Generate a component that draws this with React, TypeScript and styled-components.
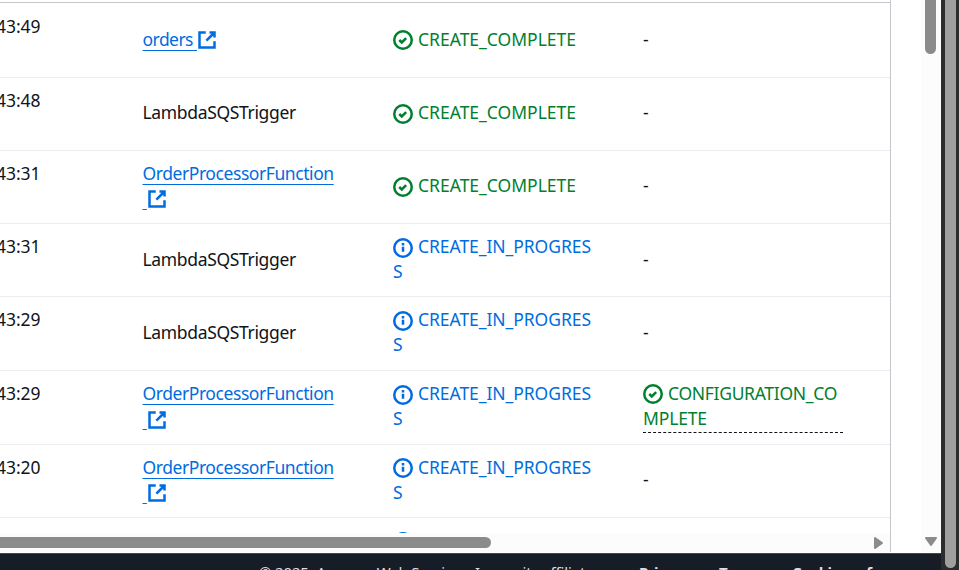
import React from "react";
import styled, { createGlobalStyle } from "styled-components";

const GlobalStyle = createGlobalStyle`
  *, *::before, *::after { box-sizing: border-box; }
  html, body { margin: 0; height: 570px; overflow: hidden; background: #fff; }
`;

const Page = styled.div`
  display: flex;
  width: 959px;
  height: 570px;
  overflow: hidden;
  background: #fff;
  color: #0f141a;
  font-family: "Noto Sans", "Open Sans", sans-serif;
  font-size: 17.5px;
  line-height: 25px;
`;

const Main = styled.div`
  width: 941px;
  display: flex;
  flex-direction: column;
`;

const Body = styled.div`
  height: 553px;
  flex: none;
  display: flex;
  justify-content: space-between;
`;

const Panel = styled.section`
  width: 891px;
  height: 552px;
  border-right: 1px solid #c6c6cd;
  display: flex;
  flex-direction: column;
`;

const Rows = styled.div`
  height: 533px;
  padding-top: 2px;
  overflow: hidden;
  flex: none;
`;

const HeaderRule = styled.div`
  height: 1px;
  background: #c6c6cd;
`;

const Row = styled.div<{ $height: number }>`
  display: grid;
  grid-template-columns: 142.5px 250.5px 250px 200px;
  align-items: start;
  height: ${(p) => p.$height}px;
  border-bottom: 1px solid #ebebf0;
`;

const Cell = styled.div<{ $top?: number }>`
  padding-top: ${(p) => p.$top ?? 10}px;
  white-space: nowrap;
`;

const TimeText = styled.span`
  display: inline-block;
  margin-left: -4px;
  letter-spacing: -0.05px;
`;

const Text = styled.span<{ $spacing?: number }>`
  letter-spacing: ${(p) => p.$spacing ?? 0}px;
`;

const Link = styled.a`
  color: #006ce0;
  text-decoration: underline;
  text-decoration-thickness: 1px;
  text-underline-offset: 4px;
`;

const Status = styled.div<{ $tone: "success" | "info"; $dashed?: boolean }>`
  color: ${(p) => (p.$tone === "success" ? "#00802f" : "#006ce0")};
  border-bottom: ${(p) => (p.$dashed ? "1px dashed #0f141a" : "none")};
  padding-bottom: ${(p) => (p.$dashed ? "1px" : "0")};
`;

const Line = styled.div`
  height: 25px;
`;

const Glyph = styled.svg<{ $drop: number }>`
  width: 20px;
  height: 20px;
  fill: none;
  stroke: currentColor;
  stroke-width: 2;
  vertical-align: ${(p) => -p.$drop}px;
`;

const StatusGlyph = styled(Glyph)`
  margin-right: 5px;
`;

const HorizontalTrack = styled.div`
  height: 19px;
  background: #fcfcfc;
  display: flex;
  align-items: center;
  justify-content: space-between;
  padding-right: 6px;
`;

const HorizontalThumb = styled.div`
  width: 491px;
  height: 11px;
  border-radius: 0 6px 6px 0;
  background: #8b8b8b;
`;

const VerticalTrack = styled.div`
  width: 20px;
  height: 552px;
  background: #fcfcfc;
  display: flex;
  flex-direction: column;
  justify-content: space-between;
  align-items: center;
  padding: 0 1px 5px 0;
`;

const VerticalThumb = styled.div`
  width: 11px;
  height: 54px;
  border-radius: 0 0 6px 6px;
  background: #8b8b8b;
`;

const Arrow = styled.svg`
  display: block;
  fill: #8b8b8b;
  stroke: #8b8b8b;
  stroke-linejoin: round;
`;

const Footer = styled.footer`
  height: 17px;
  overflow: hidden;
  display: flex;
  background: #161d26;
  border-top: 1px solid #424650;
  color: #dedee3;
  font-size: 15px;
  line-height: 20px;
  padding: 8px 0 0 259px;
  white-space: nowrap;
`;

const Copyright = styled.span`
  width: 380px;
  flex: none;
  letter-spacing: -0.15px;
`;

const FooterLink = styled.a<{ $width: number }>`
  width: ${(p) => p.$width}px;
  flex: none;
  font-weight: 700;
  letter-spacing: -0.55px;
`;

const WindowTrack = styled.div`
  width: 18px;
  background: #2c2c2c;
  padding-left: 4px;
`;

const WindowThumb = styled.div`
  width: 11px;
  height: 568px;
  border-radius: 0 0 6px 6px;
  background: #9f9f9f;
`;

const External = ({ drop = 4 }: { drop?: number }) => (
  <Glyph viewBox="0 0 16 16" $drop={drop}>
    <path d="M10 2h4v4M7.5 8.5 14 2M14 9.048V14H2V2h5" />
  </Glyph>
);

const Check = ({ drop = 4 }: { drop?: number }) => (
  <StatusGlyph viewBox="0 0 16 16" $drop={drop}>
    <circle cx="8" cy="8" r="7" />
    <path d="m5 8 2 2 3.521-3.521" />
  </StatusGlyph>
);

const Info = ({ drop = 4 }: { drop?: number }) => (
  <StatusGlyph viewBox="0 0 16 16" $drop={drop}>
    <circle cx="8" cy="8" r="7" />
    <path d="M8 11V7M8 6V4" />
  </StatusGlyph>
);

const Complete = ({ drop }: { drop?: number }) => (
  <Status $tone="success">
    <Line>
      <Check drop={drop} />
      <Text>CREATE_COMPLETE</Text>
    </Line>
  </Status>
);

const InProgress = ({ drop }: { drop?: number }) => (
  <Status $tone="info">
    <Line>
      <Info drop={drop} />
      <Text $spacing={-0.06}>CREATE_IN_PROGRES</Text>
    </Line>
    <Line>S</Line>
  </Status>
);

const ConfigurationComplete = () => (
  <Status $tone="success" $dashed>
    <Line>
      <Check />
      <Text $spacing={-0.3}>CONFIGURATION_CO</Text>
    </Line>
    <Line>
      <Text $spacing={-0.15}>MPLETE</Text>
    </Line>
  </Status>
);

type StackEvent = {
  time: string;
  resource: string;
  height: number;
  done?: boolean;
  configured?: boolean;
  timeTop?: number;
  singleTop: number;
  statusDrop: number;
  linkDrop?: number;
};

const events: StackEvent[] = [
  { time: "43:49", resource: "orders", done: true, height: 75, timeTop: 11, singleTop: 24, statusDrop: 4 },
  { time: "43:48", resource: "LambdaSQSTrigger", done: true, height: 73, singleTop: 22, statusDrop: 5 },
  { time: "43:31", resource: "OrderProcessorFunction", done: true, height: 73, singleTop: 22, statusDrop: 5 },
  { time: "43:31", resource: "LambdaSQSTrigger", height: 73, singleTop: 23, statusDrop: 5 },
  { time: "43:29", resource: "LambdaSQSTrigger", height: 74, singleTop: 23, statusDrop: 5 },
  { time: "43:29", resource: "OrderProcessorFunction", configured: true, height: 74, singleTop: 23, statusDrop: 5, linkDrop: 5 },
  { time: "43:20", resource: "OrderProcessorFunction", height: 73, singleTop: 22, statusDrop: 4 },
];

const Resource = ({ event }: { event: StackEvent }) => {
  const { resource, linkDrop } = event;
  if (resource === "LambdaSQSTrigger") {
    return <Text $spacing={-0.34}>{resource}</Text>;
  }
  if (resource === "orders") {
    return (
      <Link>
        <Text $spacing={-0.54}>{resource}{"\u00a0"}</Text>
        <External drop={linkDrop} />
      </Link>
    );
  }
  return (
    <>
      <Line>
        <Link><Text $spacing={-0.43}>{resource}</Text></Link>
      </Line>
      <Line>
        <Link>
          <Text $spacing={-0.2}>{"\u00a0"}</Text>
          <External drop={linkDrop} />
        </Link>
      </Line>
    </>
  );
};

export default function App() {
  return (
    <>
      <GlobalStyle />
      <Page>
        <Main>
          <Body>
            <Panel>
              <Rows>
                <HeaderRule />
                {events.map((e, i) => (
                  <Row key={i} $height={e.height}>
                    <Cell $top={e.timeTop}><TimeText>{e.time}</TimeText></Cell>
                    <Cell $top={e.resource === "OrderProcessorFunction" ? 10 : e.singleTop}>
                      <Resource event={e} />
                    </Cell>
                    <Cell $top={e.done ? e.singleTop : 10}>
                      {e.done ? <Complete drop={e.statusDrop} /> : <InProgress drop={e.statusDrop} />}
                    </Cell>
                    <Cell $top={e.configured ? 10 : e.singleTop}>
                      {e.configured ? <ConfigurationComplete /> : "-"}
                    </Cell>
                  </Row>
                ))}
                <Row $height={74}>
                  <Cell />
                  <Cell />
                  <Cell><InProgress drop={5} /></Cell>
                </Row>
              </Rows>
              <HorizontalTrack>
                <HorizontalThumb />
                <Arrow width="11" height="14" viewBox="0 0 11 14"><path d="M2 2v10l7-5z" strokeWidth="2" /></Arrow>
              </HorizontalTrack>
            </Panel>
            <VerticalTrack>
              <VerticalThumb />
              <Arrow width="14" height="11" viewBox="0 0 14 11"><path d="M2 2h10l-5 7z" strokeWidth="2" /></Arrow>
            </VerticalTrack>
          </Body>
          <Footer>
            <Copyright>© 2025, Amazon Web Services, Inc. or its affiliates.</Copyright>
            <FooterLink $width={80}>Privacy</FooterLink>
            <FooterLink $width={73}>Terms</FooterLink>
            <FooterLink $width={140}>Cookie preferences</FooterLink>
          </Footer>
        </Main>
        <WindowTrack><WindowThumb /></WindowTrack>
      </Page>
    </>
  );
}
